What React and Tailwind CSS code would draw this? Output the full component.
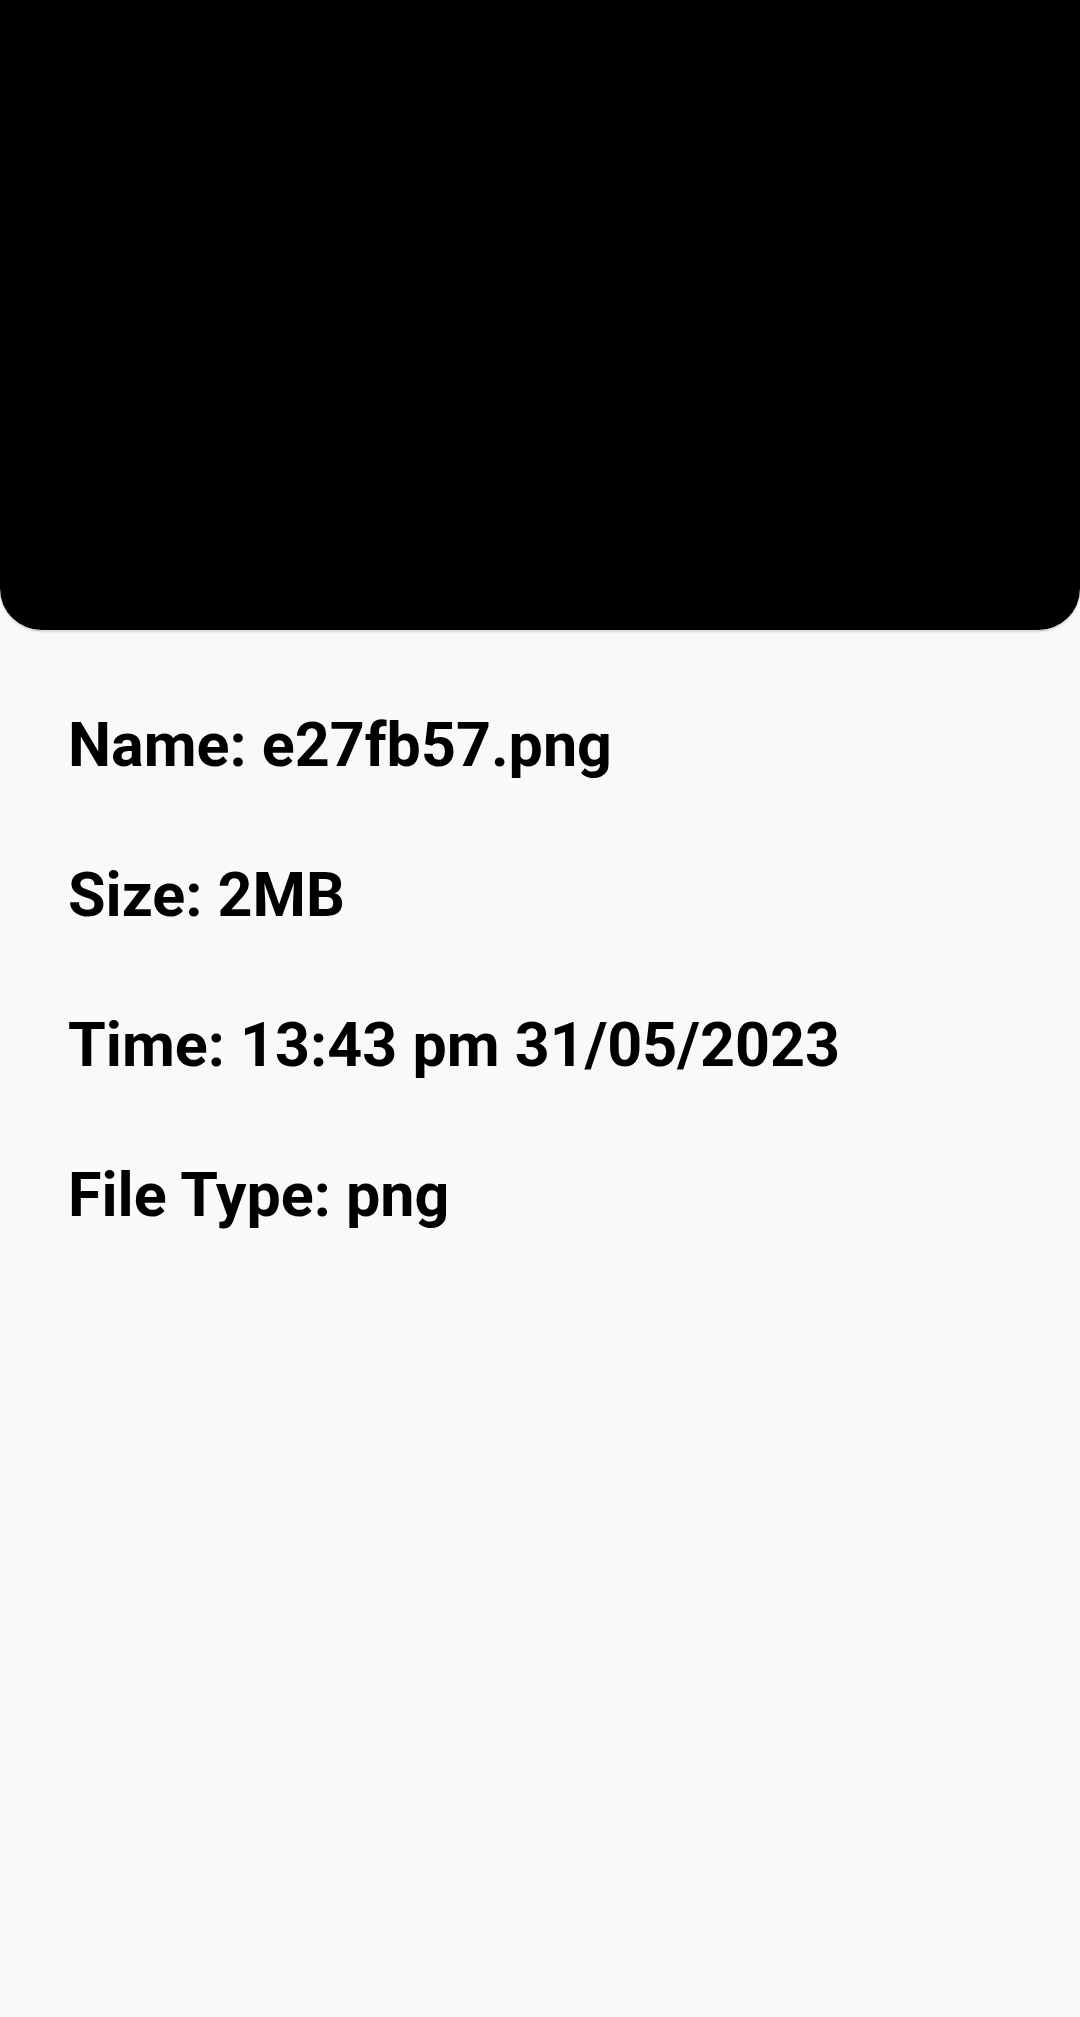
import React from 'react';

const details = [
  'Name: e27fb57.png',
  'Size: 2MB',
  'Time: 13:43 pm 31/05/2023',
  'File Type: png',
];

export default function App() {
  return (
    <div className="min-h-[2017px] bg-[#f9f9f9]" style={{ fontFamily: 'Roboto, "Noto Sans", sans-serif' }}>
      {/* Preview area */}
      <div className="h-[631px] bg-black rounded-b-[42px] border-b border-[#e0e0e0] shadow-[0_1px_2px_rgba(0,0,0,0.15)]" />
      {/* File details */}
      <div className="px-[68px] pt-[39px]">
        {details.map((line) => (
          <p key={line} className="text-[61px] font-bold leading-[150px] text-black">
            {line}
          </p>
        ))}
      </div>
    </div>
  );
}
